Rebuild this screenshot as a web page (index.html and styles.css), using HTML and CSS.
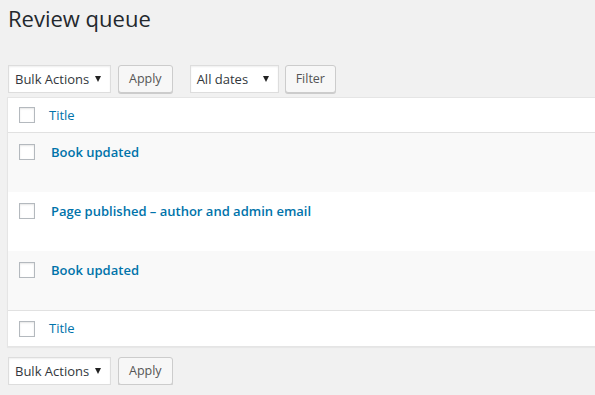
FILE: index.html
```html
<!DOCTYPE html>
<html lang="en">
<head>
  <meta charset="UTF-8" />
  <title>Review queue</title>
  <link rel="stylesheet" href="styles.css">
</head>
<body>
  <div class="wrap">
    <h1>Review queue</h1>

    <!-- Top actions -->
    <div class="tablenav top">
      <div class="select bulk"><span>Bulk Actions</span><span class="arrow"></span></div>
      <button class="button">Apply</button>
      <div class="select dates"><span>All dates</span><span class="arrow"></span></div>
      <button class="button">Filter</button>
    </div>

    <!-- List table -->
    <table class="list-table">
      <thead>
        <tr>
          <td class="check-column"><span class="checkbox"></span></td>
          <th class="title-column"><a href="#">Title</a></th>
        </tr>
      </thead>
      <tbody>
        <tr class="alt">
          <th class="check-column"><span class="checkbox"></span></th>
          <td class="title-cell"><a class="row-title" href="#">Book updated</a></td>
        </tr>
        <tr>
          <th class="check-column"><span class="checkbox"></span></th>
          <td class="title-cell"><a class="row-title" href="#">Page published – author and admin email</a></td>
        </tr>
        <tr class="alt">
          <th class="check-column"><span class="checkbox"></span></th>
          <td class="title-cell"><a class="row-title" href="#">Book updated</a></td>
        </tr>
      </tbody>
      <tfoot>
        <tr>
          <td class="check-column"><span class="checkbox"></span></td>
          <th class="title-column"><a href="#">Title</a></th>
        </tr>
      </tfoot>
    </table>

    <!-- Bottom actions -->
    <div class="tablenav bottom">
      <div class="select bulk"><span>Bulk Actions</span><span class="arrow"></span></div>
      <button class="button">Apply</button>
    </div>
  </div>
</body>
</html>
```

FILE: styles.css
```css
/* Global */
html, body {
  margin: 0;
  overflow: hidden;
}
body {
  background-color: #f1f1f1;
  color: #444;
  font-family: "Segoe UI", "Open Sans", "Liberation Sans", sans-serif;
  font-size: 13px;
}
a {
  color: #0073aa;
  text-decoration: none;
}
.wrap {
  padding-left: 8px;
  width: 700px;
}
h1 {
  margin: 0;
  padding: 3px 0 0;
  font-size: 22px;
  font-weight: 400;
  line-height: 30px;
  color: #23282d;
}
/* Table nav (selects + buttons) */
.tablenav {
  display: flex;
  align-items: flex-start;
  height: 28px;
}
.tablenav.top {
  margin-top: 32px;
}
.tablenav.bottom {
  margin-top: 10px;
}
.select {
  display: flex;
  align-items: center;
  justify-content: space-between;
  box-sizing: border-box;
  height: 28px;
  padding: 0 7px 0 6px;
  background-color: #fff;
  border: 1px solid #ddd;
  box-shadow: inset 0 1px 2px rgba(0, 0, 0, 0.07);
  color: #32373c;
  font-size: 13px;
}
.select.bulk {
  width: 103px;
  margin-right: 7px;
}
.select.dates {
  width: 89px;
  margin-left: 17px;
  margin-right: 6px;
}
.arrow {
  width: 0;
  height: 0;
  border-left: 3px solid transparent;
  border-right: 3px solid transparent;
  border-top: 6px solid #222;
  margin-right: 2px;
}
.button {
  box-sizing: border-box;
  height: 28px;
  padding: 0 10px 1px;
  background-color: #f7f7f7;
  border: 1px solid #ccc;
  border-radius: 3px;
  box-shadow: 0 1px 0 #ccc;
  color: #555;
  font-family: inherit;
  font-size: 12.5px;
}
/* List table */
.list-table {
  margin-top: 4px;
  margin-left: -1px;
  width: 100%;
  border-spacing: 0;
  background-color: #fff;
  border: 1px solid #e5e5e5;
  box-shadow: 0 1px 1px rgba(0, 0, 0, 0.04);
}
.list-table th,
.list-table td {
  box-sizing: border-box;
  padding: 0;
  text-align: left;
  vertical-align: top;
  font-weight: 400;
}
.list-table thead th,
.list-table thead td {
  height: 35px;
  border-bottom: 1px solid #e1e1e1;
}
.list-table tfoot th,
.list-table tfoot td {
  height: 36px;
  border-top: 1px solid #e1e1e1;
}
.check-column {
  width: 33px;
  padding-left: 11px !important;
}
thead .check-column {
  padding-top: 9px !important;
}
tfoot .check-column {
  padding-top: 10px !important;
}
tbody .check-column {
  padding-top: 11px !important;
}
.title-column {
  padding: 7px 8px 0 !important;
  line-height: 20px;
}
.list-table tbody tr {
  height: 59px;
}
.list-table tbody tr.alt {
  background-color: #f9f9f9;
}
.title-cell {
  padding: 9px 10px 0 !important;
  line-height: 20px;
}
.row-title {
  font-weight: 600;
  font-size: 13px;
}
.checkbox {
  display: block;
  width: 16px;
  height: 16px;
  box-sizing: border-box;
  background-color: #fff;
  border: 1px solid #b4b9be;
  box-shadow: inset 0 1px 2px rgba(0, 0, 0, 0.1);
}
```
